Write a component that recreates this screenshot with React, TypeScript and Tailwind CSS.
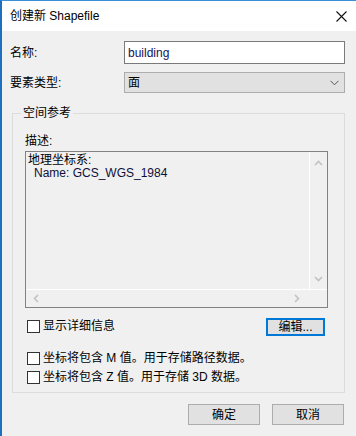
import React from "react";

const font = "font-['Liberation_Sans','Noto_Sans_CJK_SC',sans-serif]";

function Chevron({ dir, className }: { dir: "up" | "down" | "left" | "right"; className?: string }) {
    const paths: Record<string, string> = {
        up: "M1 6 L4.5 2.5 L8 6",
        down: "M1 3 L4.5 6.5 L8 3",
        left: "M6 1 L2.5 4.5 L6 8",
        right: "M3 1 L6.5 4.5 L3 8",
    };
    return (
        <svg width="9" height="9" viewBox="0 0 9 9" className={className}>
            <path d={paths[dir]} fill="none" stroke="currentColor" strokeWidth="1.6" />
        </svg>
    );
}

function CheckBox({ label }: { label: React.ReactNode }) {
    return (
        <div className="flex items-center h-[13px]">
            <div className="w-[13px] h-[13px] bg-white border border-[#333333] shrink-0" />
            <span className="ml-[3px] text-[12px] leading-[13px] text-black whitespace-nowrap">{label}</span>
        </div>
    );
}

export default function App() {
    return (
        <div className={`w-[356px] h-[436px] bg-[#f0f0f0] flex flex-col border-l-2 border-l-[#1f6fbf] border-t border-t-[#3b8fd9] ${font}`}>
            {/* title bar */}
            <div className="h-[30px] bg-white flex items-center justify-between pl-[8px] pr-[9px] shrink-0">
                <span className="text-[12px] text-black leading-none">创建新 Shapefile</span>
                <svg width="11" height="11" viewBox="0 0 11 11">
                    <path d="M0.5 0.5 L10.5 10.5 M10.5 0.5 L0.5 10.5" stroke="#111" strokeWidth="1.1" />
                </svg>
            </div>

            <div className="flex flex-col pl-[8px] pr-[11px]">
                {/* name row */}
                <div className="flex items-center mt-[10px] h-[23px]">
                    <span className="w-[114px] text-[12px] leading-none text-black">名称:</span>
                    <div className="flex-1 h-full bg-white border border-[#7a7a7a] flex items-center pl-[3px]">
                        <span className="text-[12px] leading-none text-[#14145a]">building</span>
                    </div>
                </div>

                {/* feature type row */}
                <div className="flex items-center mt-[8px] h-[21px]">
                    <span className="w-[114px] text-[12px] leading-none text-black">要素类型:</span>
                    <div className="flex-1 h-full bg-[#e1e1e1] border border-[#adadad] flex items-center justify-between pl-[3px] pr-[5px]">
                        <span className="text-[12px] leading-none text-black">面</span>
                        <svg width="9" height="6" viewBox="0 0 9 6">
                            <path d="M0.5 0.8 L4.5 4.8 L8.5 0.8" fill="none" stroke="#555" strokeWidth="1" />
                        </svg>
                    </div>
                </div>

                {/* spatial reference group */}
                <div className="relative mt-[20px] ml-[2px] border border-[#dcdcdc] pl-[12px] pr-[16px] pt-[19px] pb-[8px]">
                    <span className="absolute -top-[8px] left-[8px] bg-[#f0f0f0] px-[2px] text-[12px] leading-[14px] text-black">空间参考</span>

                    <div className="text-[12px] leading-[16px] text-black h-[16px]">描述:</div>

                    <div className="mt-[2px] h-[157px] border border-[#828282] flex flex-col">
                        <div className="flex flex-1 min-h-0">
                            <div className="flex-1 pl-[2px] pt-[2px] text-[12px] leading-[13px] text-black">
                                <div>地理坐标系:</div>
                                <div className="pl-[6px] text-[#0f0f3a]">Name: GCS_WGS_1984</div>
                            </div>
                            <div className="w-[18px] border-l border-l-white flex flex-col items-center justify-between pt-[7px] pb-[6px] text-[#c2c2c2]">
                                <Chevron dir="up" />
                                <Chevron dir="down" />
                            </div>
                        </div>
                        <div className="h-[18px] flex border-t border-t-white">
                            <div className="flex-1 flex items-center justify-between pl-[6px] pr-[8px] text-[#c2c2c2]">
                                <Chevron dir="left" />
                                <Chevron dir="right" />
                            </div>
                            <div className="w-[18px]" />
                        </div>
                    </div>

                    <div className="flex items-center justify-between mt-[10px] h-[17px] pl-[2px]">
                        <CheckBox label="显示详细信息" />
                        <div className="w-[59px] h-[18px] mr-[3px] bg-[#e1e1e1] border-2 border-[#0078d7] flex items-center justify-center text-[12px] leading-none text-black">
                            编辑...
                        </div>
                    </div>

                    <div className="flex flex-col gap-[6px] mt-[17px] pl-[2px]">
                        <CheckBox label="坐标将包含 M 值。用于存储路径数据。" />
                        <CheckBox label="坐标将包含 Z 值。用于存储 3D 数据。" />
                    </div>
                </div>

                {/* buttons */}
                <div className="flex justify-end gap-[12px] mt-[11px] pr-[1px]">
                    <div className="w-[72px] h-[21px] bg-[#e1e1e1] border border-[#adadad] flex items-center justify-center text-[12px] leading-none text-black">确定</div>
                    <div className="w-[72px] h-[21px] bg-[#e1e1e1] border border-[#adadad] flex items-center justify-center text-[12px] leading-none text-black">取消</div>
                </div>
            </div>
        </div>
    );
}
